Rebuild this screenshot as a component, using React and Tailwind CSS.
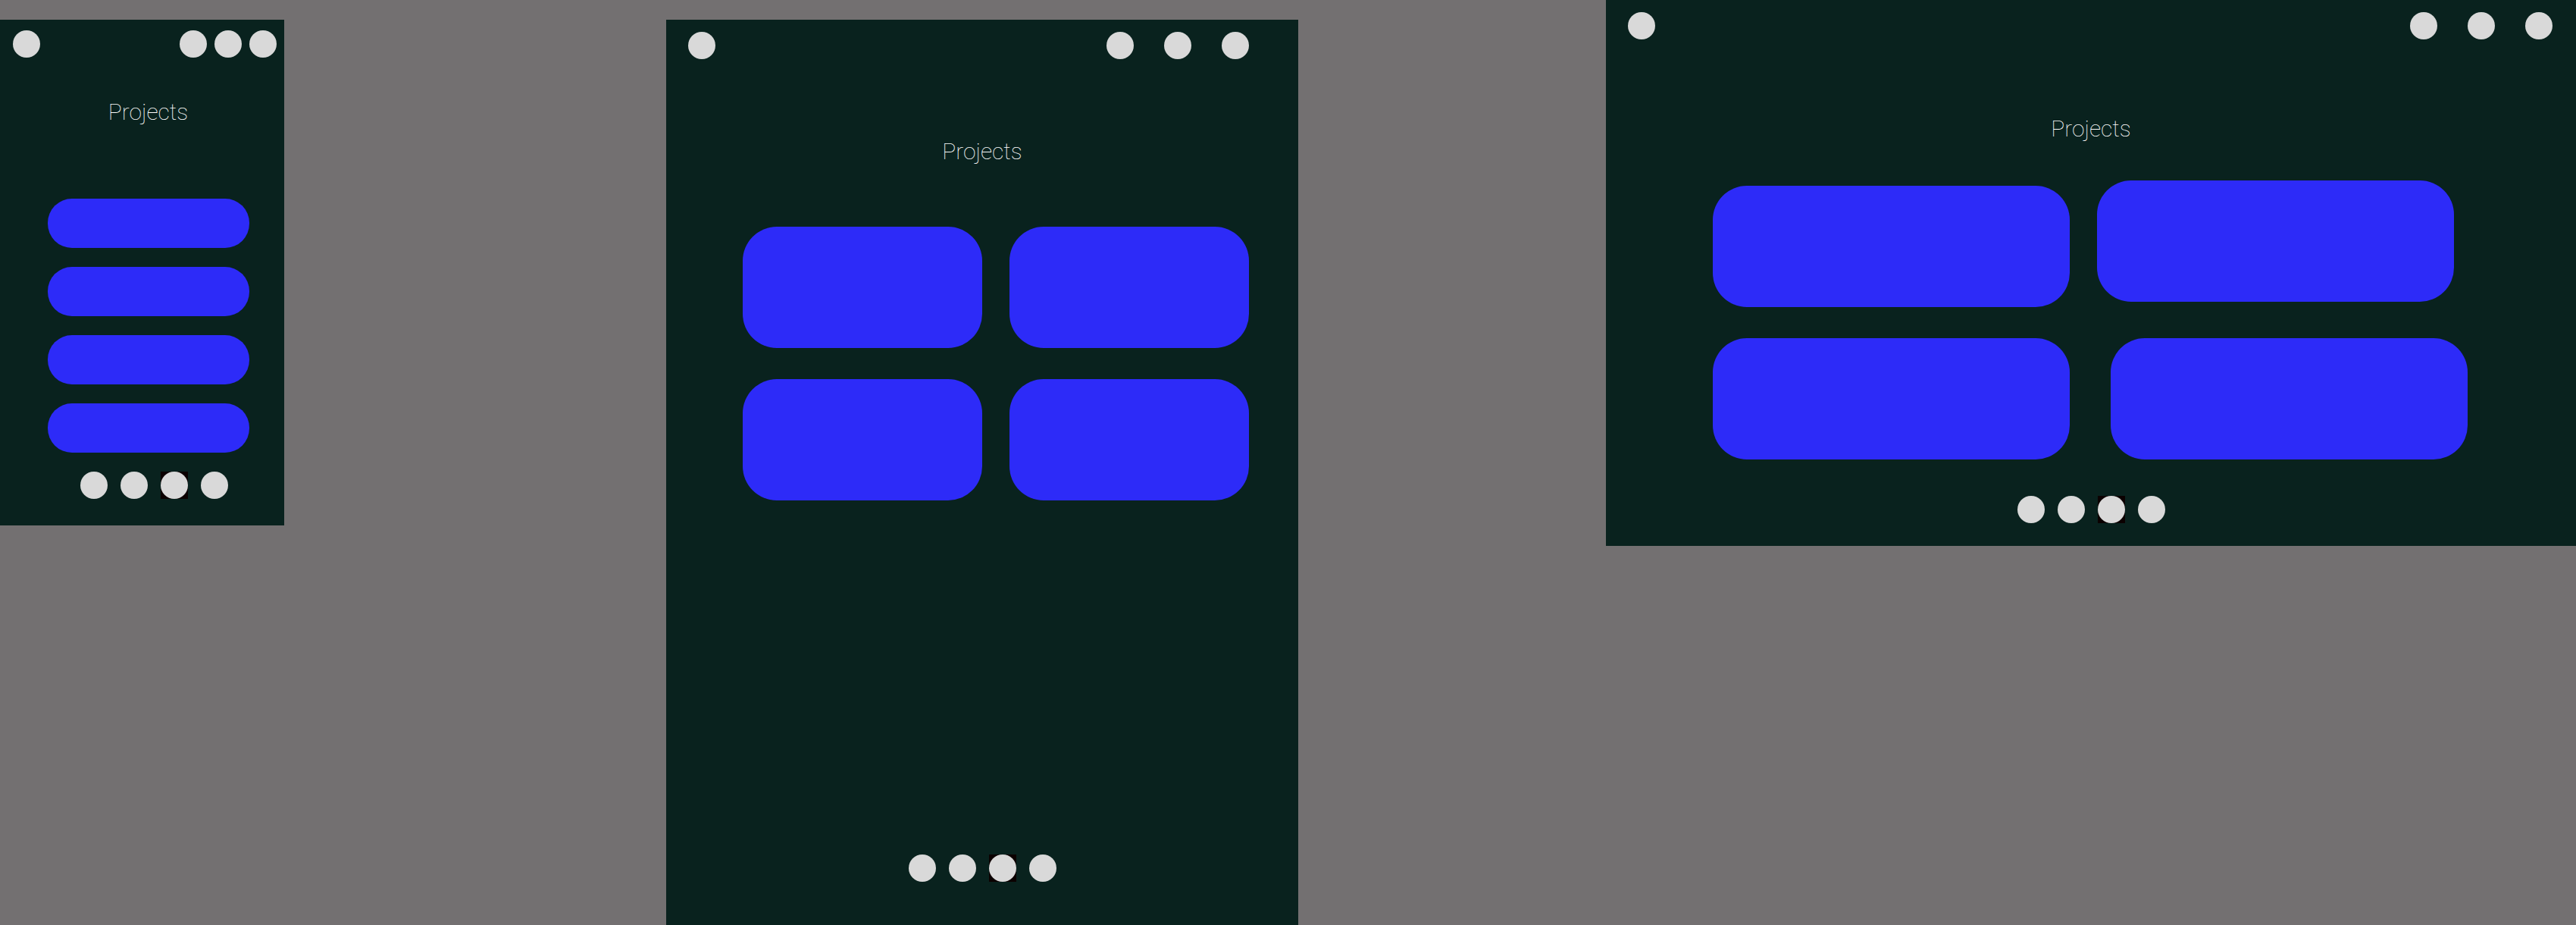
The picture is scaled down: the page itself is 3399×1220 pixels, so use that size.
function Dot({ label, active = false }) {
  return (
    <button type="button" aria-label={label} className={active ? "size-9 bg-[#0b0000]" : "size-9"}>
      <span className="block size-9 rounded-full bg-[#d9d9d9]" />
    </button>
  );
}

function Header({ className, gap }) {
  return (
    <header className={`flex items-center justify-between ${className}`}>
      <Dot label="Home" />
      <nav aria-label="Main" className={`flex ${gap}`}>
        <Dot label="Projects" />
        <Dot label="About" />
        <Dot label="Contact" />
      </nav>
    </header>
  );
}

function Pager({ className }) {
  return (
    <footer className={`flex justify-center gap-[17px] ${className}`}>
      <Dot label="Page 1" />
      <Dot label="Page 2" />
      <Dot label="Page 3" active />
      <Dot label="Page 4" />
    </footer>
  );
}

function Title({ className }) {
  return (
    <h1
      className={`text-center font-['Roboto',sans-serif] text-3xl leading-10 font-thin text-white ${className}`}
    >
      Projects
    </h1>
  );
}

function Card({ className = "" }) {
  return <article className={`h-40 rounded-[45px] bg-[#2d2bf8] ${className}`} />;
}

function Pill() {
  return <article className="h-[65px] rounded-[32px] bg-[#2d2bf8]" />;
}

function Phone() {
  return (
    <section className="mt-[26px] flex flex-col self-start bg-[#09221e] pt-[14px] pb-[35px]">
      <Header className="pr-[10px] pl-[17px]" gap="gap-[10px]" />
      <Title className="mt-[52px] pl-4" />
      <div className="mt-[94px] flex flex-col gap-[25px] pr-[46px] pl-[63px]">
        <Pill />
        <Pill />
        <Pill />
        <Pill />
      </div>
      <Pager className="mt-[25px] pl-8" />
    </section>
  );
}

function Tablet() {
  return (
    <section className="col-start-3 mt-[26px] flex flex-col bg-[#09221e] pt-4 pb-[57px]">
      <Header className="pr-[65px] pl-[29px]" gap="gap-10" />
      <Title className="mt-[102px]" />
      <div className="mt-[79px] grid grid-cols-2 gap-x-9 gap-y-[41px] pr-[65px] pl-[101px]">
        <Card />
        <Card />
        <Card />
        <Card />
      </div>
      <Pager className="mt-auto pt-10" />
    </section>
  );
}

function Desktop() {
  return (
    <section className="col-start-5 flex flex-col self-start bg-[#09221e] pt-4 pb-[30px]">
      <Header className="pr-[31px] pl-[29px]" gap="gap-10" />
      <Title className="mt-[98px]" />
      <div className="mt-12 flex h-[167px] gap-9 pr-[161px] pl-[141px]">
        <Card className="flex-1 self-end" />
        <Card className="flex-1 self-start" />
      </div>
      <div className="mt-[41px] flex gap-[54px] pr-[143px] pl-[141px]">
        <Card className="flex-1" />
        <Card className="flex-1" />
      </div>
      <Pager className="mt-12" />
    </section>
  );
}

export default function App() {
  return (
    <main className="grid min-h-screen grid-cols-[375fr_504fr_834fr_406fr_1280fr] bg-[#737071]">
      <Phone />
      <Tablet />
      <Desktop />
    </main>
  );
}
